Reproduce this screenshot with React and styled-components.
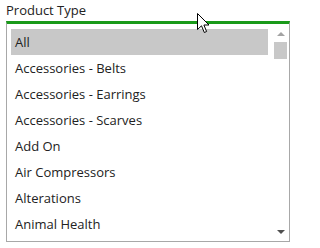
import React from "react";
import styled, { createGlobalStyle } from "styled-components";

const GlobalStyle = createGlobalStyle`
  body {
    margin: 0;
    background: #ffffff;
    font-family: "Open Sans", "Liberation Sans", sans-serif;
  }
`;

const Wrapper = styled.div`
  position: relative;
  width: 302px;
  height: 248px;
  padding: 0 12px 0 6px;
  box-sizing: border-box;
`;

const Label = styled.div`
  font-size: 13px;
  line-height: 20px;
  color: #222;
  margin-bottom: 1px;
`;

const ListBox = styled.div`
  display: flex;
  height: 221px;
  box-sizing: border-box;
  border: 1px solid #a8a8a8;
  border-top: 3px solid #1a9a1a;
  background: #fff;
`;

const Options = styled.ul`
  flex: 1;
  list-style: none;
  margin: 0;
  padding: 5px 4px 0 4px;
  overflow: hidden;
`;

const Option = styled.li`
  height: 26px;
  line-height: 26px;
  padding-left: 4px;
  font-size: 13px;
  color: #222;
  white-space: nowrap;
  background: ${({ selected }) => (selected ? "#c8c8c8" : "transparent")};
`;

const Scrollbar = styled.div`
  width: 17px;
  display: flex;
  flex-direction: column;
  align-items: center;
`;

const Arrow = styled.div`
  width: 0;
  height: 0;
  border-left: 4px solid transparent;
  border-right: 4px solid transparent;
  ${({ down }) =>
    down
      ? "border-top: 4px solid #505050; margin-top: auto; margin-bottom: 7px;"
      : "border-bottom: 4px solid #a3a3a3; margin-top: 8px;"}
`;

const Thumb = styled.div`
  width: 13px;
  height: 17px;
  margin-top: 6px;
  background: #c8c8c8;
`;

const Cursor = styled.svg`
  position: absolute;
  left: 197px;
  top: 13px;
`;

const items = [
  "All",
  "Accessories - Belts",
  "Accessories - Earrings",
  "Accessories - Scarves",
  "Add On",
  "Air Compressors",
  "Alterations",
  "Animal Health"
];

export default function App() {
  return (
    <Wrapper>
      <GlobalStyle />
      <Label>Product Type</Label>
      <ListBox>
        <Options>
          {items.map((item, i) => (
            <Option key={item} selected={i === 0}>
              {item}
            </Option>
          ))}
        </Options>
        <Scrollbar>
          <Arrow />
          <Thumb />
          <Arrow down />
        </Scrollbar>
      </ListBox>
      <Cursor width="13" height="21" viewBox="0 0 13 21">
        <path
          d="M0.5 0.5 L0.5 16.5 L4.5 12.8 L7.3 19.5 L9.6 18.5 L6.9 12 L12 12 Z"
          fill="#fff"
          stroke="#000"
          strokeWidth="1"
          strokeLinejoin="miter"
        />
      </Cursor>
    </Wrapper>
  );
}
